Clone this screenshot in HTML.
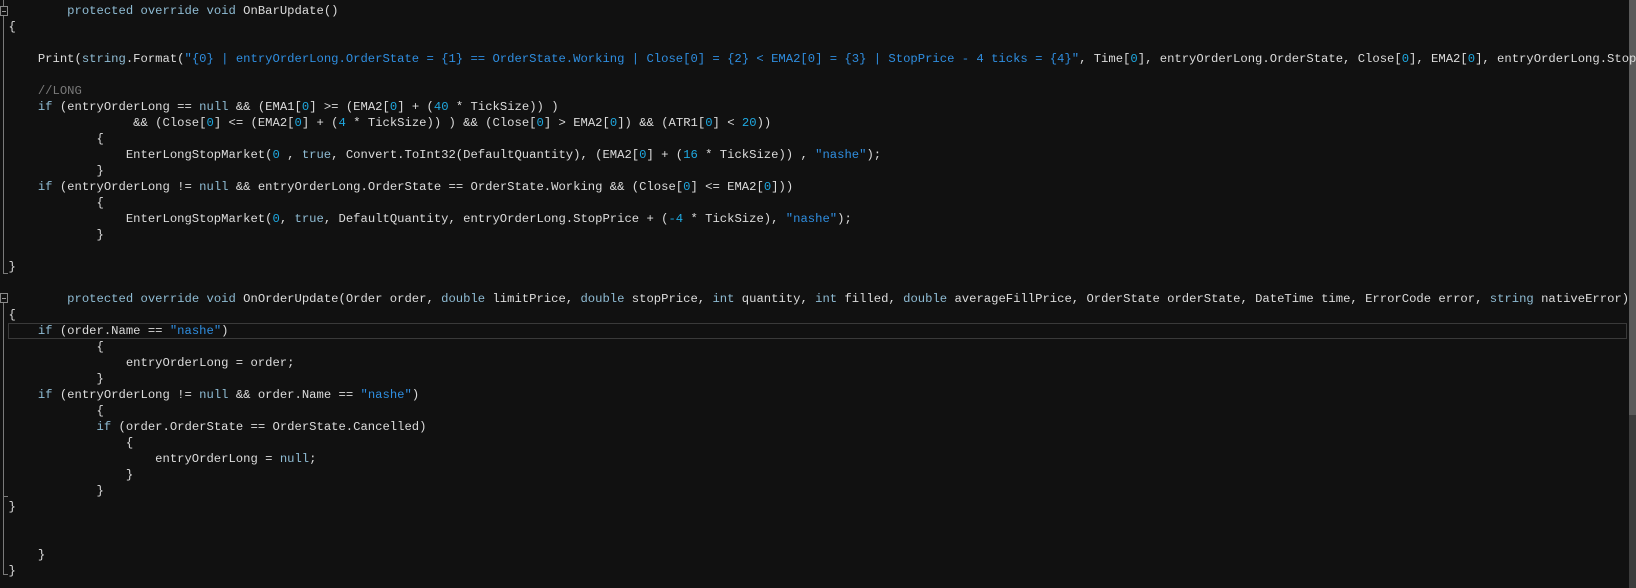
<!DOCTYPE html>
<html><head><meta charset="utf-8"><style>
html,body{margin:0;padding:0;background:#111111;width:1636px;height:588px;overflow:hidden}
pre{position:absolute;left:8.5px;top:3px;margin:0;font-family:"Liberation Mono",monospace;font-size:12.23px;line-height:16px;color:#dcdcdc;white-space:pre}
.k{color:#8fbcd4}.s{color:#2f8ee0}.n{color:#1fa8e0}.c{color:#7a7a7a}
.g{position:absolute;background:#7a7a7a}
.hl{position:absolute;left:8px;top:323px;width:1617px;height:14px;border:1px solid #3a3a3a}
.fold{position:absolute;left:0;width:6px;height:8px;border:1px solid #888;background:#111}
.fold:after{content:"";position:absolute;left:1px;top:3.5px;width:4px;height:1px;background:#999}
</style></head><body>
<div class="hl"></div>
<div class="g" style="left:3px;top:0;width:1px;height:273px"></div>
<div class="g" style="left:3px;top:273px;width:5px;height:1px"></div>
<div class="g" style="left:3px;top:294px;width:1px;height:280px"></div>
<div class="g" style="left:3px;top:496px;width:5px;height:1px"></div>
<div class="g" style="left:3px;top:574px;width:5px;height:1px"></div>
<div class="fold" style="top:6px"></div>
<div class="fold" style="top:293px"></div>
<div style="position:absolute;left:1629px;top:0;width:7px;height:415px;background:#5a5a5a"></div>
<div style="position:absolute;left:1629px;top:415px;width:7px;height:173px;background:#3c3c3c"></div>
<pre>        <span class="k">protected override void</span> OnBarUpdate()
{

    Print(<span class="k">string</span>.Format(<span class="s">"{0} | entryOrderLong.OrderState = {1} == OrderState.Working | Close[0] = {2} &lt; EMA2[0] = {3} | StopPrice - 4 ticks = {4}"</span>, Time[<span class="n">0</span>], entryOrderLong.OrderState, Close[<span class="n">0</span>], EMA2[<span class="n">0</span>], entryOrderLong.StopPrice));

    <span class="c">//LONG</span>
    <span class="k">if</span> (entryOrderLong == <span class="k">null</span> &amp;&amp; (EMA1[<span class="n">0</span>] &gt;= (EMA2[<span class="n">0</span>] + (<span class="n">40</span> * TickSize)) )
                 &amp;&amp; (Close[<span class="n">0</span>] &lt;= (EMA2[<span class="n">0</span>] + (<span class="n">4</span> * TickSize)) ) &amp;&amp; (Close[<span class="n">0</span>] &gt; EMA2[<span class="n">0</span>]) &amp;&amp; (ATR1[<span class="n">0</span>] &lt; <span class="n">20</span>))
            {
                EnterLongStopMarket(<span class="n">0</span> , <span class="k">true</span>, Convert.ToInt32(DefaultQuantity), (EMA2[<span class="n">0</span>] + (<span class="n">16</span> * TickSize)) , <span class="s">"nashe"</span>);
            }
    <span class="k">if</span> (entryOrderLong != <span class="k">null</span> &amp;&amp; entryOrderLong.OrderState == OrderState.Working &amp;&amp; (Close[<span class="n">0</span>] &lt;= EMA2[<span class="n">0</span>]))
            {
                EnterLongStopMarket(<span class="n">0</span>, <span class="k">true</span>, DefaultQuantity, entryOrderLong.StopPrice + (<span class="n">-4</span> * TickSize), <span class="s">"nashe"</span>);
            }

}

        <span class="k">protected override void</span> OnOrderUpdate(Order order, <span class="k">double</span> limitPrice, <span class="k">double</span> stopPrice, <span class="k">int</span> quantity, <span class="k">int</span> filled, <span class="k">double</span> averageFillPrice, OrderState orderState, DateTime time, ErrorCode error, <span class="k">string</span> nativeError)
{
    <span class="k">if</span> (order.Name == <span class="s">"nashe"</span>)
            {
                entryOrderLong = order;
            }
    <span class="k">if</span> (entryOrderLong != <span class="k">null</span> &amp;&amp; order.Name == <span class="s">"nashe"</span>)
            {
            <span class="k">if</span> (order.OrderState == OrderState.Cancelled)
                {
                    entryOrderLong = <span class="k">null</span>;
                }
            }
}


    }
}</pre>
</body></html>
